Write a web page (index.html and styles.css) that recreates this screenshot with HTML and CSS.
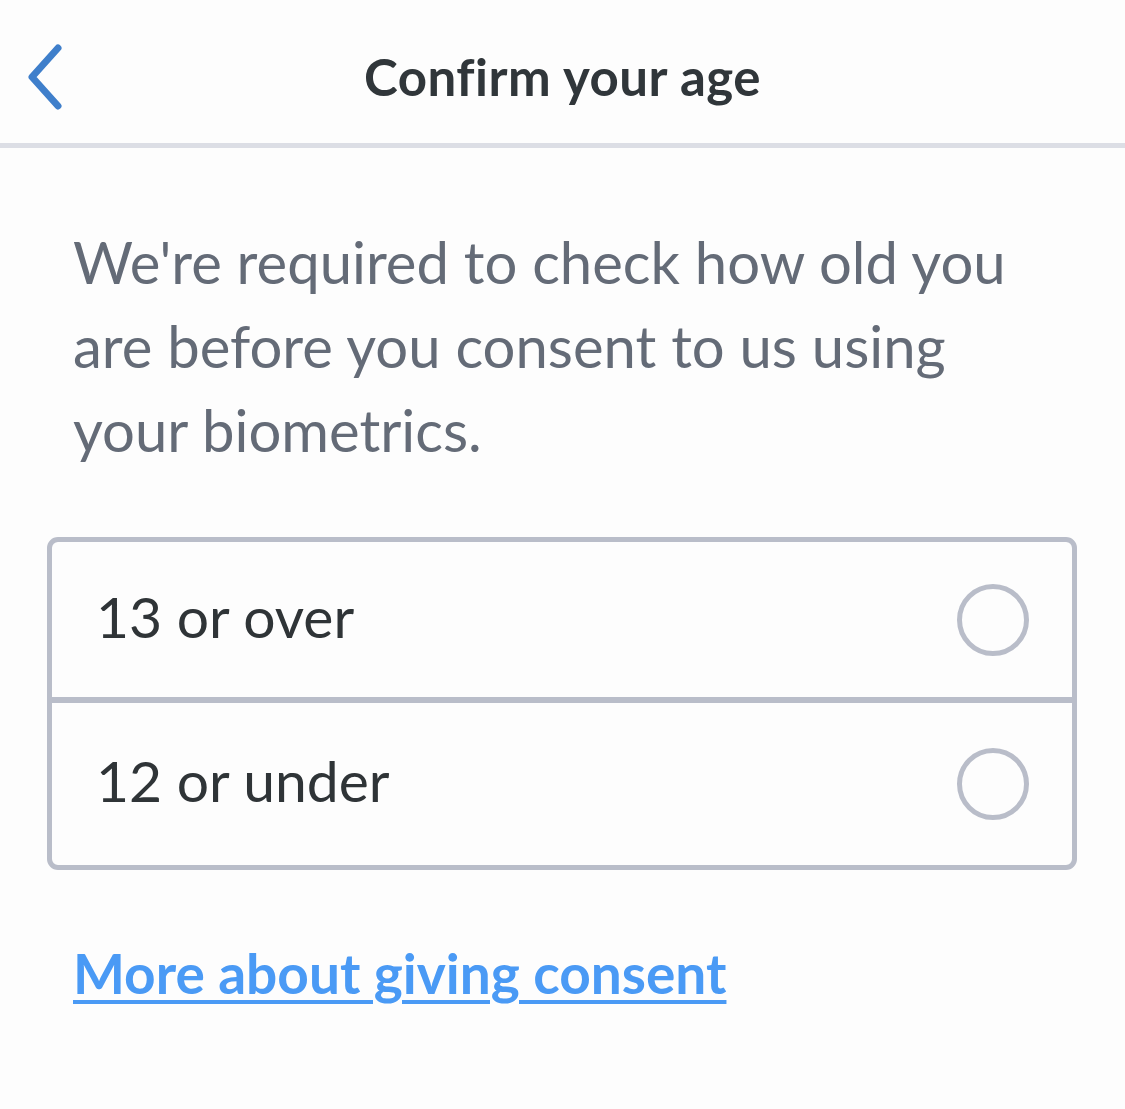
FILE: index.html
```html
<!DOCTYPE html>
<html lang="en">
<head>
  <meta charset="UTF-8">
  <meta name="viewport" content="width=device-width, initial-scale=1.0">
  <title>Confirm your age</title>
  <link rel="stylesheet" href="styles.css">
</head>
<body>
  <header class="topbar">
    <button class="back" aria-label="Back">
      <svg width="42" height="66" viewBox="0 0 42 66">
        <path d="M35 4 L9 33 L35 62" fill="none" stroke="#3f7fcb" stroke-width="7" stroke-linecap="round" stroke-linejoin="round"/>
      </svg>
    </button>
    <h1>Confirm your age</h1>
  </header>

  <main class="content">
    <p class="intro">We're required to check how old you are before you consent to us using your biometrics.</p>

    <div class="options">
      <label class="option">
        <span class="option-label">13 or over</span>
        <span class="radio"></span>
      </label>
      <label class="option">
        <span class="option-label">12 or under</span>
        <span class="radio"></span>
      </label>
    </div>

    <a class="more" href="#">More about giving consent</a>
  </main>
</body>
</html>
```

FILE: styles.css
```css
/* General Styles */
body {
  margin: 0;
  background: #fdfdfd;
  font-family: 'Lato', 'Noto Sans', sans-serif;
  color: #2f3437;
}

.topbar {
  position: relative;
  height: 143px;
  display: flex;
  align-items: center;
  justify-content: center;
  border-bottom: 5px solid #dcdee5;
}

.back {
  position: absolute;
  left: 23px;
  top: 44px;
  background: none;
  border: none;
  padding: 0;
}

.topbar h1 {
  margin: 0;
  padding-top: 10px;
  font-size: 51px;
  font-weight: 700;
  letter-spacing: 0.5px;
  color: #30363a;
}

.content {
  padding: 0 48px 0 47px;
}

.intro {
  max-width: 955px;
  margin: 72px 0 0 26px;
  font-size: 58px;
  line-height: 84px;
  color: #646b77;
}

.options {
  margin-top: 65px;
  border: 5px solid #b9bdc9;
  border-radius: 11px;
  background: #fdfdfd;
}

.option {
  height: 155px;
  display: flex;
  align-items: center;
  justify-content: space-between;
  padding: 0 43px 0 44px;
  font-size: 57px;
  color: #2f3437;
}

.option + .option {
  height: 162px;
  border-top: 6px solid #b9bdc9;
}

.option-label {
  padding-bottom: 8px;
}

.radio {
  width: 62px;
  height: 62px;
  border: 5px solid #b9bdc9;
  border-radius: 50%;
}

.more {
  display: inline-block;
  margin: 70px 0 0 26px;
  font-size: 55px;
  font-weight: 700;
  color: #4a9af5;
  text-decoration-thickness: 4px;
  text-underline-offset: 6px;
}
```
